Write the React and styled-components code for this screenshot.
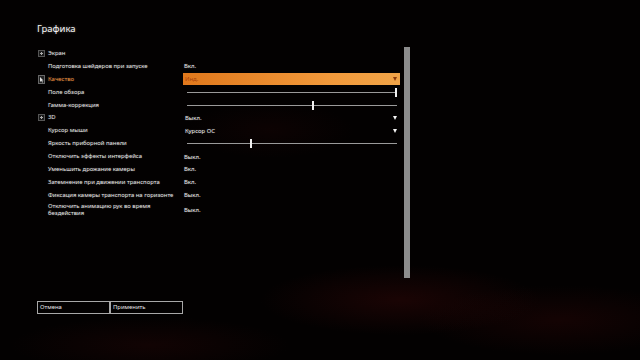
import React from "react";
import styled, { createGlobalStyle } from "styled-components";

const Global = createGlobalStyle`
  html, body { margin: 0; padding: 0; background: #000; }
  body { font-family: "Noto Sans", "DejaVu Sans", sans-serif; }
`;

const Screen = styled.div`
  width: 640px;
  height: 360px;
  overflow: hidden;
  box-sizing: border-box;
  padding: 22px 0 0 37px;
  background:
    radial-gradient(ellipse 200px 50px at 400px 300px, rgba(70, 10, 10, 0.35), transparent 70%),
    radial-gradient(ellipse 200px 50px at 560px 320px, rgba(60, 8, 8, 0.3), transparent 70%),
    radial-gradient(ellipse 200px 40px at 150px 345px, rgba(50, 8, 8, 0.3), transparent 70%),
    radial-gradient(ellipse 120px 40px at 270px 130px, rgba(40, 6, 6, 0.25), transparent 70%),
    #030101;
  color: #ececec;
  display: flex;
  flex-direction: column;
`;

const Title = styled.div`
  font-size: 9.5px;
  line-height: 13px;
  color: #f4f4f4;
  text-shadow: 0 0 3px rgba(255, 255, 255, 0.35);
  height: 25px;
`;

const Body = styled.div`
  display: flex;
  gap: 4px;
  height: 231px;
`;

const List = styled.div`
  width: 363px;
  display: flex;
  flex-direction: column;
`;

const Row = styled.div`
  display: grid;
  grid-template-columns: 146px 217px;
  align-items: center;
  height: ${(p) => (p.tall ? "16px" : "12.9px")};
`;

const Label = styled.div`
  display: flex;
  align-items: center;
  gap: 3px;
  padding-left: ${(p) => (p.group ? "1px" : "11px")};
  font-size: 5.9px;
  line-height: 7px;
  color: ${(p) => (p.active ? "#eb8d33" : "#e4e4e4")};
  text-shadow: 0 0 2px rgba(255, 255, 255, 0.25);
  white-space: ${(p) => (p.wrap ? "normal" : "nowrap")};
`;

const LabelText = styled.span`
  width: ${(p) => (p.wrap ? "104px" : "auto")};
`;

const PlusBox = styled.span`
  width: 7px;
  height: 7px;
  box-sizing: border-box;
  border: 1px solid #555;
  background: #1a1a1a;
  position: relative;
  flex: none;
  &::before, &::after {
    content: "";
    position: absolute;
    background: #aaa;
  }
  &::before { left: 1px; right: 1px; top: 2px; height: 1px; }
  &::after { top: 1px; bottom: 1px; left: 2px; width: 1px; }
`;

const CursorBox = styled.span`
  width: 7px;
  height: 9px;
  flex: none;
  display: flex;
  align-items: center;
  justify-content: center;
`;

const Value = styled.div`
  font-size: 5.9px;
  color: #f0f0f0;
  padding-left: 1px;
  text-shadow: 0 0 2px rgba(255, 255, 255, 0.25);
  white-space: nowrap;
`;

const Select = styled.div`
  display: flex;
  align-items: center;
  justify-content: space-between;
  height: ${(p) => (p.active ? "12px" : "10px")};
  padding: 0 3px 0 2px;
  box-sizing: border-box;
  font-size: 5.9px;
  color: ${(p) => (p.active ? "#a8420c" : "#f0f0f0")};
  background: ${(p) => (p.active ? "linear-gradient(90deg, #e0781c, #f29a3c 70%, #f0a448)" : "transparent")};
  text-shadow: ${(p) => (p.active ? "none" : "0 0 2px rgba(255,255,255,0.25)")};
`;

const Arrow = styled.span`
  width: 0;
  height: 0;
  border-left: 2.5px solid transparent;
  border-right: 2.5px solid transparent;
  border-top: 4px solid ${(p) => (p.dark ? "#8a3a0c" : "#f4f4f4")};
`;

const SliderTrack = styled.div`
  position: relative;
  margin: 0 3px 0 4px;
  height: 1px;
  background: #9a9a9a;
`;

const Thumb = styled.div`
  position: absolute;
  top: -4px;
  width: 2px;
  height: 9px;
  margin-left: -1px;
  background: #f0f0f0;
`;

const Scrollbar = styled.div`
  width: 6px;
  height: 231px;
  background: #8c8c8c;
`;

const Footer = styled.div`
  display: flex;
  margin-top: 23px;
`;

const Button = styled.div`
  width: 73px;
  height: 13px;
  box-sizing: border-box;
  border: 1px solid #a8a8a8;
  font-size: 5.9px;
  line-height: 11px;
  padding-left: 2px;
  color: #e8e8e8;
`;

const Slider = ({ value }) => (
  <SliderTrack>
    <Thumb style={{ left: `${value}%` }} />
  </SliderTrack>
);

const rows = [
  { label: "Экран", group: true },
  { label: "Подготовка шейдеров при запуске", value: "Вкл." },
  { label: "Качество", active: true, select: "Инд.", selActive: true, cursor: true },
  { label: "Поле обзора", slider: 99.5 },
  { label: "Гамма-коррекция", slider: 60 },
  { label: "3D", group: true, select: "Выкл." },
  { label: "Курсор мыши", select: "Курсор ОС" },
  { label: "Яркость приборной панели", slider: 30.5 },
  { label: "Отключить эффекты интерфейса", value: "Выкл." },
  { label: "Уменьшить дрожание камеры", value: "Вкл." },
  { label: "Затемнение при движении транспорта", value: "Вкл." },
  { label: "Фиксация камеры транспорта на горизонте", value: "Выкл." },
  { label: "Отключить анимацию рук во время бездействия", value: "Выкл.", tall: true },
];

export default function App() {
  return (
    <Screen>
      <Global />
      <Title>Графика</Title>
      <Body>
        <List>
          {rows.map((r) => (
            <Row key={r.label} tall={r.tall}>
              <Label group={r.group || r.cursor} active={r.active} wrap={r.tall}>
                {r.group && <PlusBox />}
                {r.cursor && (
                  <CursorBox>
                    <svg width="7" height="9" viewBox="0 0 7 9">
                      <rect x="0.5" y="0.5" width="6" height="8" fill="#222" stroke="#666" />
                      <path d="M2 2 L2 7 L3.2 5.8 L4.2 7.6 L5 7.2 L4 5.4 L5.5 5.4 Z" fill="#ddd" />
                    </svg>
                  </CursorBox>
                )}
                <LabelText wrap={r.tall}>{r.label}</LabelText>
              </Label>
              {r.value && <Value>{r.value}</Value>}
              {r.select && (
                <Select active={r.selActive}>
                  <span>{r.select}</span>
                  <Arrow dark={r.selActive} />
                </Select>
              )}
              {r.slider !== undefined && <Slider value={r.slider} />}
            </Row>
          ))}
        </List>
        <Scrollbar />
      </Body>
      <Footer>
        <Button>Отмена</Button>
        <Button>Применить</Button>
      </Footer>
    </Screen>
  );
}
